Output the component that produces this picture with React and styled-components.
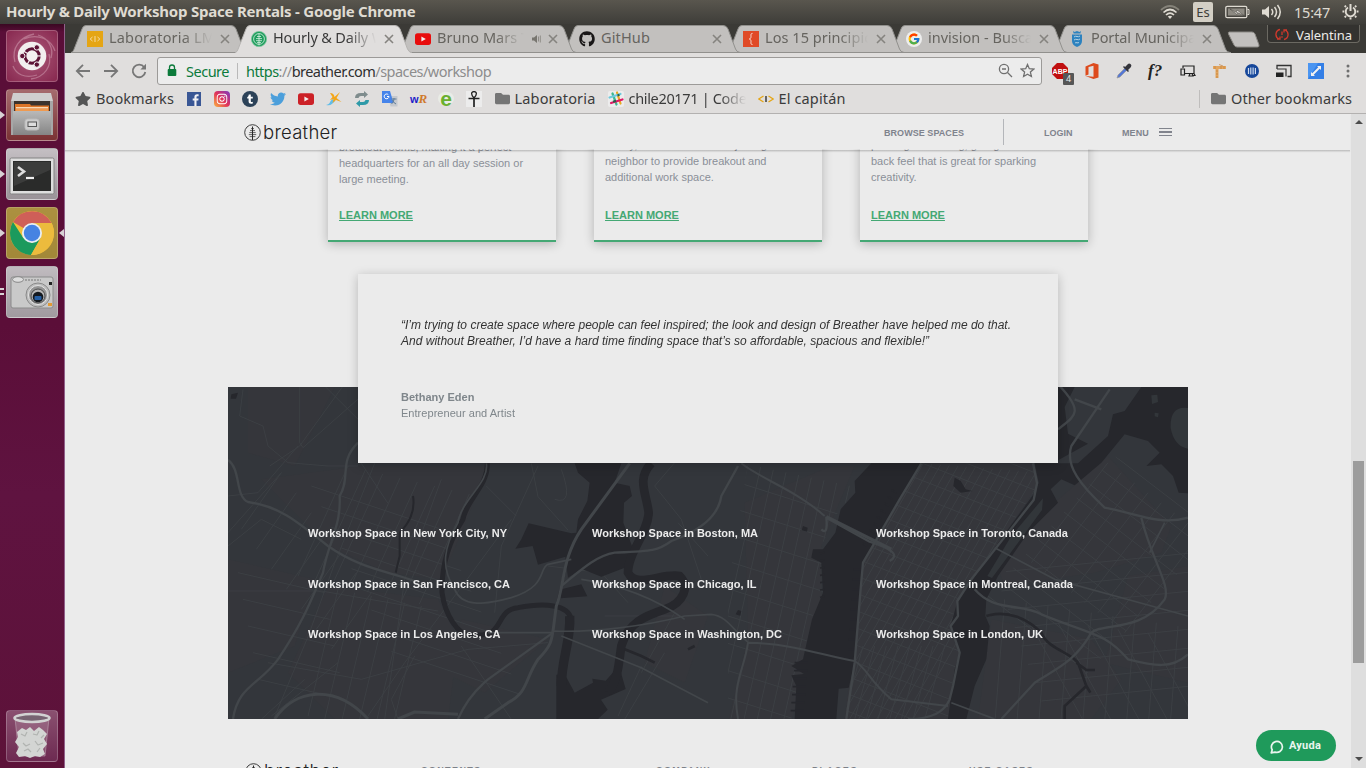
import React, { useLayoutEffect, useRef, useState } from "react";
import styled, { createGlobalStyle, css } from "styled-components";
import { FaInstagram, FaTwitter, FaGithub, FaFolder, FaStar } from "react-icons/fa";
import { FcGoogle } from "react-icons/fc";

const GlobalStyle = createGlobalStyle`
  *, *::before, *::after { box-sizing: border-box; }
  body { margin: 0; overflow: hidden; background: #ebebeb; }
  svg { display: block; flex: none; }
`;

const ui = css`font-family: "Noto Sans", "Open Sans", sans-serif;`;
const web = css`font-family: "Liberation Sans", Arial, sans-serif;`;

/* Text whose tracking is adjusted so that it takes a given width. */
const FitBox = styled.span`
  display: inline-block;
  white-space: pre;
  flex: none;
`;
function Fit({ w, children }) {
  const ref = useRef(null);
  const [spacing, setSpacing] = useState(0);
  useLayoutEffect(() => {
    const el = ref.current;
    el.style.letterSpacing = "0px";
    const natural = el.getBoundingClientRect().width;
    const next = (w - natural) / el.textContent.length;
    el.style.letterSpacing = `${next}px`;
    setSpacing(next);
  }, [w]);
  return <FitBox ref={ref} style={{ letterSpacing: spacing }}>{children}</FitBox>;
}

/* ---------- desktop shell ---------- */
const Desktop = styled.div`
  ${ui}
  width: 1366px;
  height: 768px;
  display: flex;
  flex-direction: column;
  overflow: hidden;
`;
const TopPanel = styled.header`
  height: 24px;
  flex: none;
  display: flex;
  align-items: center;
  justify-content: space-between;
  padding: 0 7px 0 6px;
  background: linear-gradient(#59564e, #3e3d39);
  color: #dfdbd2;
`;
const PanelTitle = styled.div`
  font-size: 15px;
  font-weight: 700;
  line-height: 22px;
  padding-bottom: 2px;
`;
const Indicators = styled.div`
  display: flex;
  align-items: center;
  font-size: 14.5px;
  line-height: 22px;
  padding-bottom: 1px;
`;
const Indicator = styled.div`
  display: flex;
  margin-right: ${(p) => p.$gap}px;
`;
const KeyboardBadge = styled.div`
  width: 20px;
  height: 20px;
  margin-right: 12px;
  border-radius: 2px;
  background: #d3cfc5;
  color: #3f3e3a;
  font-size: 13px;
  line-height: 20px;
  text-align: center;
`;
const DesktopBody = styled.div`
  flex: 1;
  min-height: 0;
  display: flex;
`;

/* ---------- launcher ---------- */
const Launcher = styled.nav`
  width: 65px;
  flex: none;
  display: flex;
  flex-direction: column;
  gap: 7px;
  padding: 6px 6px 6px;
  background: linear-gradient(#3a0822 0, #5a0e38 8px, #5b0e38 300px, #5f1340 470px, #5d1239 100%);
  border-right: 1px solid #91608a;
`;
const LauncherTile = styled.div`
  position: relative;
  width: 52px;
  height: 52px;
  flex: none;
  border-radius: 4px;
  background: ${(p) => p.$bg};
  border: 1px solid rgba(255, 255, 255, 0.22);
  display: flex;
  align-items: center;
  justify-content: center;
  margin-top: ${(p) => (p.$last ? "auto" : 0)};
`;
const Pip = styled.i`
  position: absolute;
  top: 21px;
  ${(p) => (p.$right ? "right: -7px; border-right: 5px solid #d8d2d5;" : "left: -7px; border-left: 5px solid #d8d2d5;")}
  border-top: 4px solid transparent;
  border-bottom: 4px solid transparent;
`;
const Bars = styled.i`
  position: absolute;
  left: -7px;
  top: 21px;
  width: 4px;
  height: 7px;
  border-top: 2px solid #d8d2d5;
  border-bottom: 2px solid #d8d2d5;
`;

/* ---------- browser ---------- */
const Browser = styled.main`
  flex: 1;
  min-width: 0;
  display: flex;
  flex-direction: column;
`;
const TabStrip = styled.div`
  height: 29px;
  flex: none;
  display: flex;
  padding: 1px 0 0 6px;
  background: #3b3a36;
  position: relative;
`;
const Tab = styled.div`
  position: relative;
  z-index: ${(p) => p.$z};
  width: ${(p) => p.$w}px;
  height: 28px;
  flex: none;
  color: ${(p) => (p.$active ? "#3a3a3a" : "#66645f")};
`;
const TabShape = styled.svg`
  position: absolute;
  left: 0;
  top: 0;
`;
const TabContent = styled.div`
  position: relative;
  height: 28px;
  display: flex;
  align-items: center;
  padding-left: 16px;
`;
const TabIcon = styled.div`
  width: 22px;
  flex: none;
`;
const TabLabel = styled.div`
  width: ${(p) => p.$w}px;
  overflow: hidden;
  font-size: 14.5px;
  line-height: 25px;
  padding-bottom: 3px;
  ${(p) => p.$fade && css`mask-image: linear-gradient(90deg, #000 calc(100% - 30px), transparent calc(100% - 1px));`}
`;
const AudioIcon = styled.svg`
  margin: 0 -2px 0 6px;
`;
const CloseIcon = styled.svg`
  margin-left: 7px;
`;
const NewTab = styled.svg`
  margin: 6px 0 0 11px;
`;
const UserBadge = styled.div`
  margin: 0 6px 0 auto;
  width: 93px;
  height: 18px;
  display: flex;
  align-items: center;
  gap: 7px;
  padding: 2px 0 0 7px;
  border: 1px solid #6b6962;
  border-top: 0;
  border-radius: 0 0 4px 4px;
  background: #33322f;
  color: #ecebe8;
  font-size: 13px;
`;
const Toolbar = styled.div`
  height: 36px;
  flex: none;
  display: flex;
  align-items: center;
  padding: 0 10px 0 10px;
  background: #e0dedd;
`;
const NavIcons = styled.div`
  display: flex;
  gap: 12px;
  width: 82px;
  flex: none;
`;
const Omnibox = styled.div`
  width: 885px;
  height: 28px;
  flex: none;
  display: flex;
  align-items: center;
  padding: 0 6px 1px 9px;
  border: 1px solid #9c9a98;
  border-radius: 3px;
  background: #ececec;
  color: #8d8d8d;
  font-size: 14.5px;
`;
const Secure = styled.span`
  color: #0b7a3b;
  margin-left: 9px;
  padding-right: 8px;
  margin-right: 8px;
  line-height: 16px;
  border-right: 1px solid #b9b9b9;
`;
const UrlScheme = styled.span`color: #0b7a3b;`;
const UrlHost = styled.span`color: #2f2f2f;`;
const OmniboxActions = styled.div`
  display: flex;
  gap: 7px;
  margin-left: auto;
`;
const Extensions = styled.div`
  display: flex;
  gap: 16px;
  margin-left: 10px;
`;
const Extension = styled.div`
  position: relative;
  display: flex;
  width: 16px;
  height: 16px;
`;
const ExtensionCount = styled.span`
  position: absolute;
  left: 11px;
  top: 10px;
  width: 11px;
  height: 12px;
  background: #565656;
  color: #eee;
  border-radius: 1px;
  font: 9px/12px "Open Sans", sans-serif;
  text-align: center;
`;
const FontQuery = styled.span`
  font: italic 700 17px/15px "Liberation Serif", serif;
  color: #222;
  white-space: nowrap;
`;
const BookmarkBar = styled.div`
  height: 25px;
  flex: none;
  display: flex;
  align-items: center;
  padding: 0 14px 5px 10px;
  background: #e0dedd;
  border-bottom: 1px solid #b3b1b0;
  color: #3b3b3b;
  font-size: 14.5px;
`;
const BookmarkLabel = styled.span`
  width: ${(p) => p.$w}px;
  overflow: hidden;
  line-height: 20px;
  ${(p) => p.$fade && css`mask-image: linear-gradient(90deg, #000 calc(100% - 26px), transparent);`}
`;
const Bookmark = styled.div`
  display: flex;
  align-items: center;
  height: 18px;
  gap: ${(p) => p.$gap ?? 5}px;
  margin-left: ${(p) => p.$ml ?? 12}px;
  & > ${FitBox}, & > ${BookmarkLabel} { margin-bottom: 2px; }
`;
const OtherBookmarks = styled(Bookmark)`
  margin-left: auto;
  padding-left: 11px;
  border-left: 1px solid #bfbdbc;
`;
const TinyGlyph = styled.span`
  width: 16px;
  text-align: center;
  white-space: nowrap;
  font: ${(p) => p.$font};
  color: ${(p) => p.$c};
  background: ${(p) => p.$bg ?? "none"};
  border-radius: ${(p) => p.$r ?? 0}px;
`;

/* ---------- page ---------- */
const PageArea = styled.div`
  ${web}
  position: relative;
  flex: 1;
  min-height: 0;
  display: flex;
  background: #ebebeb;
`;
const Page = styled.div`
  flex: 1;
  min-width: 0;
  display: flex;
  flex-direction: column;
`;
const SiteNav = styled.div`
  position: relative;
  z-index: 3;
  height: 37px;
  margin-right: 1px;
  flex: none;
  display: flex;
  align-items: center;
  padding: 0 178px 1px 179px;
  background: linear-gradient(#ebebeb 35px, rgba(235, 235, 235, 0.35) 35px 36px, rgba(0, 0, 0, 0.17) 36px);
  box-shadow: 0 1px 1px rgba(0, 0, 0, 0.08);
  color: #7f838d;
  font-size: 9px;
  font-weight: 700;
`;
const NavLink = styled.a`
  margin-left: ${(p) => p.$ml}px;
  padding-top: 2px;
`;
const NavRule = styled.i`
  width: 1px;
  height: 26px;
  margin-left: 39px;
  background: #b4b6ba;
`;
const Burger = styled.i`
  width: 13px;
  height: 8px;
  margin: 0 0 0 10px;
  background: linear-gradient(#81848d 1px, transparent 1px 3px, #81848d 3px 5px, transparent 5px 7px, #81848d 7px);
`;
const Logo = styled.div`
  display: flex;
  align-items: center;
  gap: 2px;
  color: #222;
  font: 300 18.5px/20px Inter, sans-serif;
`;
const ScrollContent = styled.div`
  flex: 1;
  min-height: 0;
  margin-top: -2px;
  overflow: hidden;
  display: flex;
  flex-direction: column;
  align-items: center;
`;
const Cards = styled.section`
  display: flex;
  gap: 38px;
  margin-top: -18px;
`;
const Card = styled.article`
  width: 228px;
  height: 111px;
  padding: ${(p) => p.$top}px 11px 0;
  border-bottom: 2px solid #44a874;
  box-shadow: 0 2px 10px rgba(0, 0, 0, 0.24);
  display: flex;
  flex-direction: column;
  justify-content: space-between;
  font-size: 11px;
  line-height: 16px;
  color: #8a8f98;
`;
const CardText = styled.p`margin: 0; white-space: pre;`;
const LearnMore = styled.a`
  margin-bottom: 17px;
  color: #44a874;
  font-weight: 700;
  text-decoration: underline;
`;
const Testimonial = styled.section`
  position: relative;
  z-index: 1;
  width: 700px;
  height: 189px;
  flex: none;
  margin-top: 32px;
  padding: 43px;
  background: #ebebeb;
  box-shadow: 0 2px 10px rgba(0, 0, 0, 0.22);
`;
const Quote = styled.p`
  margin: 0 0 40px;
  font-size: 12px;
  font-style: italic;
  line-height: 16px;
  color: #333;
`;
const Person = styled.p`
  margin: 0;
  font-size: 11px;
  line-height: 16px;
  color: #7f868b;
  font-weight: ${(p) => (p.$bold ? 700 : 400)};
`;
const CityMap = styled.section`
  position: relative;
  width: 960px;
  height: 332px;
  flex: none;
  margin-top: -76px;
  background: #33363b;
  overflow: hidden;
`;
const MapArt = styled.svg`
  position: absolute;
  inset: 0;
`;
const CityGrid = styled.div`
  position: relative;
  display: grid;
  grid-template-columns: repeat(3, 284px);
  grid-auto-rows: 50.5px;
  align-items: center;
  padding: 121px 0 0 80px;
  color: #ececec;
  font-size: 11px;
  font-weight: 700;
`;
const Footer = styled.footer`
  width: 960px;
  flex: none;
  display: flex;
  padding: 42px 0 0 17px;
  color: #7d8188;
  font-size: 9px;
  font-weight: 700;
`;
const FooterHeading = styled.div`
  width: ${(p) => p.$w}px;
  padding-top: 4px;
`;
const FooterBrand = styled.div`
  width: 176px;
`;
const Scrollbar = styled.div`
  width: 15px;
  flex: none;
  display: flex;
  flex-direction: column;
  align-items: center;
  padding: 6px 0 7px;
  background: #dedede;
`;
const ScrollArrow = styled.i`
  border: 5px solid transparent;
  border-width: ${(p) => (p.$down ? "4px 4px 0" : "0 4px 4px")};
  border-${(p) => (p.$down ? "top" : "bottom")}-color: #4c4c4c;
`;
const Thumb = styled.i`
  width: 11px;
  height: 202px;
  margin: 337px 0 auto;
  background: #9c9c9c;
`;
const HelpButton = styled.button`
  position: absolute;
  right: 30px;
  bottom: 7px;
  z-index: 4;
  width: 80px;
  height: 31px;
  display: flex;
  align-items: center;
  gap: 5px;
  padding: 0 0 0 14px;
  border: 0;
  border-radius: 16px;
  background: #1f9a5b;
  color: #e9f5ee;
  font: 700 11px/31px Roboto, sans-serif;
`;
const HelpIcon = styled.svg`
  margin-top: 2px;
`;

/* ---------- drawings ---------- */
const BrandLogo = () => (
  <Logo>
    <svg width="17" height="17" viewBox="0 0 17 17" fill="none" stroke="#2a2a2a">
      <circle cx="8.5" cy="8.5" r="7.8" strokeWidth=".9" />
      <path d="M8.5 2.5V16" strokeWidth="1" />
      <path d="M7 4.6h3M6 6.6h5M5.300 8.6h6.400M4.800 10.6h7.400M5.6 12.6h5.800" strokeWidth=".7" />
    </svg>
    <Fit w={74.5}>breather</Fit>
  </Logo>
);

const Dash = () => (
  <svg width="52" height="52" viewBox="0 0 52 52">
    <g fill="none" stroke="#e7c3d0" strokeOpacity=".38" strokeWidth="1.3">
      <path d="M9 32C5 18 14 7 28 4M43 24c3 12-4 23-18 25M18 9c14-6 27 0 31 12M31 45C19 49 10 44 7 36M32 5c10 3 16 13 13 23" />
    </g>
    <circle cx="26" cy="26" r="14.3" fill="#f2efef" />
    <circle cx="26" cy="26" r="7.2" fill="none" stroke="#5c1235" strokeWidth="3" />
    <path d="M26 26L37 19.6M26 26v12M26 26H13" stroke="#f2efef" strokeWidth="1.2" transform="rotate(30 26 26)" />
    <circle cx="26" cy="26" r="4.7" fill="#f2efef" />
    <g fill="#5c1235" stroke="#f2efef" strokeWidth="1"><circle cx="16.3" cy="26" r="2.7" /><circle cx="30.8" cy="17.4" r="2.7" /><circle cx="30.8" cy="34.6" r="2.7" /></g>
  </svg>
);
const Files = () => (
  <svg width="52" height="52" viewBox="0 0 52 52">
    <defs><linearGradient id="fg" x2="0" y2="1"><stop stopColor="#b9b9b9" /><stop offset="1" stopColor="#858585" /></linearGradient></defs>
    <path d="M7 4h38l2 8v5H5v-5z" fill="#cfcfcf" /><path d="M5 12h42v34H5z" fill="#a7a7a7" />
    <path d="M8 12h36v12H8z" fill="#3b332d" /><path d="M9 15h15l1 1.5h18V24H9z" fill="#dc7528" /><path d="M10 18h32v1.5H10z" fill="#f8d9b5" /><path d="M10 20h32v3H10z" fill="#ef9a50" />
    <path d="M7 22h38v24H7z" fill="url(#fg)" /><rect x="19" y="30" width="14" height="11" rx="2.5" fill="#ccc" stroke="#bbb" /><rect x="22" y="33" width="8.5" height="4.5" fill="#ddd" stroke="#555" />
  </svg>
);
const Terminal = () => (
  <svg width="52" height="52" viewBox="0 0 52 52">
    <rect x="4" y="10" width="44" height="36" rx="1.5" fill="#dedede" stroke="#828282" /><rect x="7" y="13" width="38" height="30" fill="#2a2b2a" /><path d="M8 14h36v8L8 38z" fill="#474747" opacity=".6" />
    <path d="M12 19l6 4.5-6 4.5" fill="none" stroke="#ddd" strokeWidth="2.6" /><path d="M20 30h8" stroke="#eee" strokeWidth="2.2" />
  </svg>
);
const Chrome = () => (
  <svg width="52" height="52" viewBox="0 0 52 52">
    <circle cx="26" cy="26" r="22" fill="#f2c038" />
    <path d="M26 26L7 15A22 22 0 0 1 45.5 16H26z" fill="#cf5f58" /><path d="M7 15A22 22 0 0 0 25 48L34.7 31 26 36 17.3 31z" fill="#1b9a5d" /><path d="M26 16h19.500A22 22 0 0 1 25 48l9.700-17z" fill="#ecbb3d" />
    <circle cx="26" cy="26" r="10" fill="#e9eef3" /><circle cx="26" cy="26" r="8.2" fill="#4683e2" />
  </svg>
);
const Camera = () => (
  <svg width="52" height="52" viewBox="0 0 52 52">
    <rect x="5" y="11" width="42" height="31" rx="2" fill="#c9c9c9" stroke="#8b8b8b" /><ellipse cx="12" cy="13.5" rx="5.5" ry="2.8" fill="#ddd" stroke="#888" /><path d="M19 14h16" stroke="#777" strokeDasharray="2 1" />
    <rect x="43" y="16" width="3" height="3" fill="#222" /><rect x="42" y="37" width="4" height="3" fill="#e39a33" />
    <circle cx="32" cy="29" r="12" fill="#bdbdbd" stroke="#8a8a8a" /><circle cx="32" cy="29" r="9.5" fill="#959595" stroke="#e5e5e5" /><circle cx="32" cy="30" r="7" fill="#b5b5b5" stroke="#4e4e4e" /><circle cx="32" cy="31" r="5.300" fill="#14191f" /><rect x="28.5" y="30" width="7" height="4" rx="1" fill="#255fa4" />
  </svg>
);
const Trash = () => (
  <svg width="52" height="52" viewBox="0 0 52 52">
    <path d="M9 8h34l-4 38H13z" fill="#fff" fillOpacity=".15" stroke="#c9b5c0" strokeOpacity=".5" />
    <path d="M11 22l5-4 4 2 4-3 4 4 5-4 4 3 4 4-3 5 3 5-4 5 2 5-5 3-5-1-5 2-5-2-6 1-3-4 3-6-4-5 3-5z" fill="#d3d5d3" />
    <path d="M15 24l4 2 2-4M27 24l4 1 2-4M38 25l-3 3M17 33l3 3 4-2M29 31l3 4 5-2M18 41l4-2 3 3M31 42l3-4" stroke="#b0b3b0" fill="none" strokeWidth="1.200" strokeLinejoin="round" />
    <ellipse cx="26" cy="8" rx="17.5" ry="4" fill="#776371" stroke="#d2d2d2" strokeWidth="2.6" />
  </svg>
);

const YouTube = ({ bg = "#e80c0c" }) => (
  <svg width="16" height="16" viewBox="0 0 16 16"><rect x="0" y="2.3" width="16" height="11.6" rx="2.6" fill={bg} /><path d="M6.4 5.5v5l4.400-2.500z" fill="#f4eded" /></svg>
);
const CodeTag = ({ boxed }) => (
  <svg width="16" height="16" viewBox="0 0 16 16" fill="none" strokeWidth={boxed ? 0.9 : 1.3}>
    {boxed && <rect width="16" height="16" fill="#e5a514" />}
    <path d={boxed ? "M5.500 6L3.200 8l2.300 2M10.500 6l2.300 2-2.300 2" : "M5.500 5L.8 8l4.700 3M10.500 5L15.200 8l-4.700 3"} stroke={boxed ? "#f5e2b5" : "#e5a514"} />
    <path d="M8 5v6" stroke={boxed ? "#f5e2b5" : "#222"} />
  </svg>
);
const BreatherFavicon = () => (
  <svg width="16" height="16" viewBox="0 0 16 16" fill="none" stroke="#d9efe2"><circle cx="8" cy="8" r="7.600" fill="#1d9d5c" stroke="#7ac39a" strokeWidth=".8" /><circle cx="8" cy="8" r="5.400" strokeWidth=".8" /><path d="M8 2.500v12M6 5.500h4M5 7.600h6M5 9.700h6M6 11.600h4" strokeWidth=".8" /></svg>
);
const BraceFavicon = () => (
  <svg width="16" height="16" viewBox="0 0 16 16"><rect width="16" height="16" fill="#e04a26" /><path d="M9.500 2.400C7.600 2.400 8 4 8 5.500 8 7 7.600 7.600 6.400 8 7.600 8.400 8 9 8 10.500c0 1.500-.4 3.100 1.500 3.100" stroke="#f7e4dd" fill="none" /></svg>
);
const CrestFavicon = () => (
  <svg width="16" height="16" viewBox="0 0 16 16"><path d="M4 0l1.500 1L8 0l2.500 1L12 0l-.6 2.600h-6.800zM3 3.400h10V10c0 3-2 5-5 6-3-1-5-3-5-6z" fill="#2c82bf" /><path d="M5 6c2-2 4 1 6-1M5 9c2-2 4 1 6-1M6 12c1-1 3 .6 4-.6" stroke="#b5d2e4" fill="none" /></svg>
);
const Close = () => (
  <CloseIcon width="10" height="10" viewBox="0 0 10 10"><path d="M1 1l8 8M9 1L1 9" stroke="#85837f" strokeWidth="1.600" /></CloseIcon>
);

const tabs = [
  { label: "Laboratoria LM", w: 106, fade: true, icon: <CodeTag boxed />, step: 164 },
  { label: "Hourly & Daily W", w: 112, fade: true, icon: <BreatherFavicon />, step: 164, active: true },
  { label: "Bruno Mars T", w: 92, fade: true, icon: <YouTube />, step: 164, audio: true },
  { label: "GitHub", w: 49, icon: <FaGithub size={16} color="#191717" />, step: 164 },
  { label: "Los 15 principio", w: 108, fade: true, icon: <BraceFavicon />, step: 163 },
  { label: "invision - Busca", w: 105, fade: true, icon: <svg width="16" height="16" viewBox="0 0 16 16"><circle cx="8" cy="8" r="8" fill="#ededed" /><FcGoogle size={13} x="1.5" y="1.5" /></svg>, step: 163 },
  { label: "Portal Municipal", w: 109, fade: true, icon: <CrestFavicon />, step: 163 },
];

function Tabs() {
  return tabs.map((t, i) => (
    <Tab key={t.label} $w={t.step} $z={t.active ? 20 : 10 - i} $active={t.active}>
      <TabShape width="178" height="28" viewBox="0 0 178 28">
        <path d="M0 28C2 27 2.500 25.500 3.500 23L11 4Q12 .5 15 .5H160Q163.500.5 165 4l7.500 20Q173.500 27 177 28z" fill={t.active ? "#e0dedd" : "#c2c0be"} />
        <path d="M0 27.500C2 27 2.500 25.500 3.500 23L11 4Q12 .5 15 .5H160Q163.500.5 165 4l7.500 20Q173.500 27 177 27.500" fill="none" stroke={t.active ? "#b6b4b2" : "#91908d"} />
        {!t.active && <path d="M0 27.500H178" stroke="#91908d" />}
      </TabShape>
      <TabContent>
        <TabIcon>{t.icon}</TabIcon>
        <TabLabel $w={t.audio ? 88 : 104} $fade={t.fade}><Fit w={t.w}>{t.label}</Fit></TabLabel>
        {t.audio && (
          <AudioIcon width="12" height="12" viewBox="0 0 12 12"><path d="M1 4.500h2L6 2v8L3 7.500H1z" fill="#77756f" /><path d="M7.500 3.500v5M9.300 2.500v7" stroke="#8f8d88" /></AudioIcon>
        )}
        <Close />
      </TabContent>
    </Tab>
  ));
}

const Ext = ({ children }) => <svg width="16" height="16" viewBox="0 0 16 16">{children}</svg>;

/* Parallel streets: n lines that start at (x, y), each shifted by (sx, sy), all running along (dx, dy). */
const streets = (n, x, y, sx, sy, dx, dy) =>
  Array.from({ length: n }, (_, i) => `M${x + sx * i} ${y + sy * i}l${dx} ${dy}`).join("");

function MapDrawing() {
  return (
    <MapArt width="960" height="332" viewBox="0 3 2880 996" preserveAspectRatio="none" fill="none">
      <defs>
        <clipPath id="manhattan"><path d="M2080 232H2420L2430 300 2300 485 2235 580 2190 640 2168 720 2195 800 2180 860 2160 999H1850L1880 830 1895 620 1905 530 1940 470z" /></clipPath>
        <clipPath id="jersey"><path d="M1560 232H1900L1880 320 1835 370 1780 480 1785 620 1750 700 1725 820 1690 999H1500V600z" /></clipPath>
        <clipPath id="queens"><path d="M2530 300L2640 200 2880 330V999H2220L2275 820 2270 640z" /></clipPath>
      </defs>
      <g fill="#35363b">
        <path d="M60 3h260L200 240 60 200zM100 280l300-40 380 0-80 200-60 140-160-20-180-80zM0 520l260 60-60 200L0 860zM300 600l330 40 60 120-30 240H320L180 860zM700 700l260 60-190 160-120-60zM1550 350l260-110 70 0-100 240 0 160-60 240-30 130h-190l60-260zM1310 600l130 90-70 200-120-60z" />
        <path d="M2080 232H2420L2430 300 2235 580 2168 720 2195 800 2160 999H1850L1895 620 1905 530z" />
        <path d="M2480 350L2640 210 2830 420 2800 500 2600 560 2330 600 2300 520zM2700 570l180-30v350l-250-60zM2290 700l300 60 90 120-90 119h-340z" />
      </g>
      <g stroke="#3f4347" strokeWidth="3" opacity=".75">
        <path d={streets(8, 360, 240, 52, 12, -150, 330)} />
        <path d={streets(9, 250, 300, 30, 62, 390, 130)} />
        <path d={streets(7, 40, 430, 45, 60, 120, -170)} />
        <path d={streets(6, 330, 610, 50, 10, -90, 380)} />
        <path d={streets(5, 30, 560, 15, 80, 260, 60)} />
        <path d="M45 10l-10 80 70 30 15 60 60 50 120 10 90 0M215 0v170l10 15 170-150M290 0l100 100M345 0l-130 180-90 60M0 440l160-180M0 480l100-80 120 60M0 330l90-10 120-140M400 232l80 120M440 232l-120 300-80 220-100 240M640 280l-110 300-60 420M910 232l20 100 90 100M930 240l-110 240-20 200M775 300l90 90M850 400l-140 190-180 240-110 160M0 615h280l350 60M120 830l280 50 320-90 240-20M700 780l150 220M560 810l-70 130 20 60M1130 690h220M1240 840l-70 150M1310 800l-120 200M1240 860l100-180M1000 250q40 110-20 90M1280 300l60-70M1280 300l80 100 60 180M1350 410l90 100M130 990l200-160M230 880L100 1000M960 540l160 20 80 90M1040 450l160 60M1050 480l70 80" />
        <g clipPath="url(#jersey)"><path d={streets(12, 1560, 235, 38, 8, -170, 760)} /><path d={streets(9, 1500, 280, 0, 82, 380, 120)} /></g>
        <g clipPath="url(#manhattan)"><path d={streets(17, 2060, 230, 26, 2, -440, 770)} /><path d={streets(22, 1860, 240, 0, 52, 560, 220)} transform="translate(0 -200)" /><path d={streets(9, 1870, 780, 35, 0, -60, 220)} /></g>
        <g clipPath="url(#queens)"><path d={streets(11, 2660, 210, -38, 42, 300, 230)} /><path d={streets(8, 2640, 230, 40, 30, -230, 300)} /><path d={streets(9, 2330, 640, 65, 10, -30, 380)} /><path d={streets(8, 2300, 560, 20, 55, 600, -60)} /><path d={streets(5, 2400, 700, 90, 10, 180, 330)} /></g>
      </g>
      <g fill="#26272c">
        <path d="M1040 232H1180L1160 290 1205 300 1212 330 1188 350 1186 410 1212 480 1190 545 1120 572 1060 548 1020 575 1012 512 930 536 914 480 862 488 880 460 902 412 1030 442 1045 440 1050 400 1078 345 1085 290 1050 260z" />
        <path d="M985 866l26 0 29 54 55-30-2-12 40 6 40-45 20 70-74 32 20 30-30 29H985z" />
        <path d="M10 25l20-5-6 18-16 0zM1000 610l60-15 18 36-80 6z" />
        <path d="M1930 232H2080L2015 340 1940 470 1905 530 1897 620 1880 830 1862 905 1832 908 1825 999H1700L1705 900 1690 868 1728 864 1690 840 1725 820 1752 700 1785 620 1780 530 1750 515 1755 490 1785 490 1822 440 1838 370 1882 320 1880 285z" />
        <path d="M2490 3h50l-30 60 10 80 60 30-90 50zM2740 3H2880V322L2852 320 2835 270 2800 235 2755 240 2795 200 2760 165 2690 145 2620 230 2540 298 2500 280 2468 310 2490 350 2400 440 2310 570 2275 640 2272 690 2285 720 2275 820 2240 900 2215 999H2160L2180 850 2195 800 2168 720 2190 640 2235 580 2300 485 2420 320 2432 290 2420 232H2550L2640 150 2655 85 2690 75z" />
        <path d="M2180 275l18 10 15 25 20 5-35 5-22-20zM1725 420l14 5-2 12-16-4zM1530 672l10 3-3 14-14-4z" />
      </g>
      <path d="M2445 337L2350 450 2278 570 2292 576 2370 470 2442 372zM2880 66q-55-8-52 60 10 55 52 62zM2770 28l18-2 2 22-18 6zM2780 80l12 2-2 12-10-3z" fill="#32363a" />
      <g stroke="#26272c">
        <path d="M1270 232C1225 280 1255 320 1262 380 1260 440 1200 500 1200 560 1225 610 1300 560 1355 570 1385 600 1370 650 1310 670 1250 690 1200 710 1180 780 1170 850 1170 880 1140 920" strokeWidth="26" />
        <path d="M778 232C780 300 715 340 705 400 660 470 640 540 642 620 650 680 690 760 740 745 830 760 800 670 870 665 950 650 1020 655 1030 700 1030 760 1000 820 1000 900" strokeWidth="15" />
        <path d="M1025 690C1030 760 1000 820 1000 900" strokeWidth="28" />
        <path d="M555 330q10 60-40 110v70l-12 50M1020 520l-20 80-15 60" strokeWidth="6" />
        <path d="M2275 690C2340 670 2400 700 2440 740 2460 790 2530 800 2550 830L2575 900 2510 960V999M2545 830l30 22h26M2575 900l12 20M1190 790l50 20 40 20M1400 780l-20 10" strokeWidth="8" />
        <path d={streets(9, 2005, 320, -11, 20, -14, -8) + streets(9, 1900, 550, -2, 30, -24, 0) + streets(7, 1700, 830, -2, 24, 40, 0) + streets(7, 1790, 500, 0, 22, -14, 2)} strokeWidth="5" />
      </g>
      <g stroke="#42464a" strokeWidth="7" strokeLinejoin="round">
        <path d="M0 222C40 250 20 330 60 348 150 360 200 400 300 480 400 550 480 555 560 585" />
        <path d="M390 170C330 230 370 270 335 330 340 420 300 470 285 560 250 640 230 700 150 820 90 900 30 900 15 999" />
        <path d="M140 999C200 910 320 890 420 999M510 999L560 978 690 985" strokeWidth="9" />
        <path d="M775 232C785 290 700 340 690 410 650 480 635 540 680 610 700 660 760 660 850 635 960 600 930 550 960 535L1030 520" strokeWidth="5" />
        <path d="M1205 232L1060 430C1000 520 1010 600 985 660 970 760 980 770 930 820 890 880 900 920 840 950L770 999" strokeWidth="9" />
        <path d="M975 740L780 880Q720 930 690 999M1000 600C1050 560 1100 510 1160 500 1270 495 1290 495 1330 465 1400 440 1470 400 1480 330L1530 240" />
        <path d="M975 735C1100 740 1250 720 1370 690L1450 685C1500 690 1520 740 1560 768M1000 750L1240 845 1440 950M1060 580C1200 600 1300 650 1370 700M780 740L975 740" strokeWidth="5" />
        <path d="M1540 232C1600 280 1700 310 1790 390" strokeWidth="6" />
        <path d="M1780 430q20 20 15-35l130 72Q2030 500 1985 525" strokeWidth="7" />
        <path d="M1795 392L1990 490" strokeWidth="10" />
        <path d="M1530 999C1510 890 1550 850 1560 770 1680 770 1790 810 1880 825 1920 850 1920 880 1990 940L2160 960" strokeWidth="6" />
        <path d="M2080 232L2015 340 1940 470 1905 530 1897 620 1880 830 1855 999M2415 232l12 60-10 50L2230 580 2188 645 2190 690 2168 720 2195 800 2175 900 2165 940Q2140 1000 2040 999" />
        <path d="M2495 0C2570 80 2540 90 2490 130M2645 10L2530 180C2510 240 2560 300 2630 365 2720 380 2790 420 2880 395M2620 70L2540 40" />
        <path d="M2740 395C2770 520 2830 600 2810 640 2740 740 2620 710 2590 740 2540 830 2480 850 2420 890L2320 999M2240 610C2300 680 2380 650 2440 685 2600 750 2630 740 2700 820 2780 840 2830 850 2880 805" />
        <path d="M2300 485L2480 580 2880 690M2810 410l-45 90M2170 950l130 49" strokeWidth="5" />
      </g>
    </MapArt>
  );
}

const cards = [
  { top: 8, text: "breakout rooms, making it a perfect\nheadquarters for an all day session or\nlarge meeting." },
  { top: 6, text: "library, while there is an adjoining\nneighbor to provide breakout and\nadditional work space." },
  { top: 6, text: "paintings and a rug, giving a laid\nback feel that is great for sparking\ncreativity." },
];
const cities = [
  ["New York City, NY", 199], ["Boston, MA", 166], ["Toronto, Canada", 192],
  ["San Francisco, CA", 202], ["Chicago, IL", 164.5], ["Montreal, Canada", 197],
  ["Los Angeles, CA", 192.5], ["Washington, DC", 190], ["London, UK", 167],
];

export default function App() {
  return (
    <Desktop>
      <GlobalStyle />
      <TopPanel>
        <PanelTitle><Fit w={409.5}>Hourly &amp; Daily Workshop Space Rentals - Google Chrome</Fit></PanelTitle>
        <Indicators>
          <Indicator $gap={13}>
            <svg width="20" height="14" viewBox="0 0 20 14" fill="none" strokeWidth="1.700"><path d="M1 5Q10-3 19 5" stroke="#858279" /><path d="M3.500 7.500Q10 1.500 16.500 7.500M6 10Q10 6 14 10" stroke="#dfdbd2" /><path d="M7.800 11.500L10 14l2.200-2.500Q10 10 7.800 11.500z" fill="#dfdbd2" /></svg>
          </Indicator>
          <KeyboardBadge>Es</KeyboardBadge>
          <Indicator $gap={11}>
            <svg width="25" height="14" viewBox="0 0 25 14"><rect x=".8" y="1.300" width="21" height="11.400" rx="1.500" fill="none" stroke="#dfdbd2" strokeWidth="1.300" /><path d="M22.500 4.500h1.500v5h-1.500" fill="none" stroke="#dfdbd2" /><rect x="3" y="3.500" width="16.500" height="7" fill="#8d8a82" /><path d="M5 4l6.500 3.500L12 5l7 5.500-6.500-3L12 9.500z" fill="#f1eee8" stroke="#3e3d39" strokeWidth=".5" /></svg>
          </Indicator>
          <Indicator $gap={12}>
            <svg width="21" height="16" viewBox="0 0 21 16" fill="none" stroke="#dfdbd2" strokeWidth="1.500"><path d="M1 5.500h3L8 2v12l-4-3.500H1z" fill="#dfdbd2" stroke="none" /><path d="M10.500 5q2.500 3 0 6M13.500 3q4 5 0 10M16.500 1q5.500 7 0 14" /></svg>
          </Indicator>
          <Fit w={36}>15:47</Fit>
          <Indicator $gap={0}>
            <svg width="29" height="17" viewBox="-12 0 29 17" fill="none" stroke="#dfdbd2"><path d="M6 4.500a4.800 4.800 0 1 0 5 0" strokeWidth="2" /><path d="M8.500 1v7" strokeWidth="2" /><path d="M2.200 8.500H.5M16.500 8.500h-1.700M4 13l-1.300 1.300M13 13l1.300 1.300M8.500 14.500v2M4 4L2.700 2.700M13 4l1.300-1.300" strokeWidth="1.900" /></svg>
          </Indicator>
        </Indicators>
      </TopPanel>
      <DesktopBody>
        <Launcher>
          <LauncherTile $bg="radial-gradient(circle, #c8879f 0, #9c4467 45%, #87284f 100%)"><Dash /></LauncherTile>
          <LauncherTile $bg="linear-gradient(#a56b6e, #7a3234)"><Pip /><Files /></LauncherTile>
          <LauncherTile $bg="linear-gradient(#c4bfc3, #9a9398)"><Pip /><Terminal /></LauncherTile>
          <LauncherTile $bg="linear-gradient(#ac9040, #a28838)"><Pip /><Pip $right /><Chrome /></LauncherTile>
          <LauncherTile $bg="linear-gradient(#c0bbbf, #a19aa0)"><Bars /><Camera /></LauncherTile>
          <LauncherTile $last $bg="linear-gradient(#8a5070, #6d2a51)"><Trash /></LauncherTile>
        </Launcher>
        <Browser>
          <TabStrip>
            <Tabs />
            <NewTab width="33" height="17" viewBox="0 0 33 17"><path d="M2 1h23q2 0 3 2l4 11q.5 2-1.500 2H10q-2 0-3-2L1.500 3Q1 1 2 1z" fill="#c2c0be" stroke="#8b8985" /></NewTab>
            <UserBadge>
              <svg width="14" height="13" viewBox="0 0 14 13" fill="none" stroke="#d0392c" strokeWidth="1.300"><path d="M5 1.500a5 5 0 0 0-1 9.500M2 11h3V8.500M9 11.500a5 5 0 0 0 1-9.500M12 2H9v2.500M7 3.500v3.500M7 8.300v1.400" /></svg>
              <Fit w={56}>Valentina</Fit>
            </UserBadge>
          </TabStrip>
          <Toolbar>
            <NavIcons>
              <svg width="16" height="16" viewBox="0 0 16 16" fill="none" stroke="#777" strokeWidth="1.800"><path d="M15 8H2.500M8 1.800L1.800 8 8 14.200" /></svg>
              <svg width="16" height="16" viewBox="0 0 16 16" fill="none" stroke="#777" strokeWidth="1.800"><path d="M1 8h12.500M8 1.800L14.200 8 8 14.200" /></svg>
              <svg width="16" height="16" viewBox="0 0 16 16" fill="none" stroke="#777" strokeWidth="1.800"><path d="M13.200 4.200A6.300 6.300 0 1 0 14.300 9" /><path d="M15 .8v5.600H9.400z" fill="#777" stroke="none" /></svg>
            </NavIcons>
            <Omnibox>
              <svg width="10" height="13" viewBox="0 0 10 13"><path d="M2.500 6V3.500a2.500 2.500 0 0 1 5 0V6" fill="none" stroke="#0b7a3b" strokeWidth="1.300" /><rect x=".7" y="5" width="8.600" height="7" rx="1" fill="#0b7a3b" /></svg>
              <Secure><Fit w={43}>Secure</Fit></Secure>
              <Fit w={245}><UrlScheme>https</UrlScheme>://<UrlHost>breather.com</UrlHost>/spaces/workshop</Fit>
              <OmniboxActions>
                <svg width="15" height="15" viewBox="0 0 15 15" fill="none" stroke="#707070" strokeWidth="1.300"><circle cx="6" cy="6" r="4.600" /><path d="M9.500 9.500l4.500 4.500M4 6h4" /></svg>
                <svg width="15" height="15" viewBox="0 0 15 15" fill="none" stroke="#707070" strokeWidth="1.300"><path d="M7.500 1.500l1.800 4.200 4.500.4-3.400 3 1 4.400-3.900-2.300-3.900 2.300 1-4.400-3.400-3 4.500-.4z" /></svg>
              </OmniboxActions>
            </Omnibox>
            <Extensions>
              <Extension>
                <Ext><path d="M5 0h6l5 5v6l-5 5H5l-5-5V5z" fill="#c00f0f" /><text x="8" y="10.500" fontFamily="Liberation Sans" fontWeight="700" fontSize="7" textAnchor="middle" fill="#fff">ABP</text></Ext>
                <ExtensionCount>4</ExtensionCount>
              </Extension>
              <Extension><Ext><path d="M1.500 3.500L9.500 0l5 1.500v13l-5 1.500-8-3 8 .8V2.800L4.500 4v7.500l-3 1.200z" fill="#dd4a1c" /></Ext></Extension>
              <Extension><Ext><path d="M1 15l1-3 7-7 2 2-7 7z" fill="#5577d4" stroke="#999" strokeWidth=".7" /><path d="M7 4l5 5 1-1-1-1 3-3q1-2-.5-3T12 1L9 4 8 3z" fill="#35353b" /></Ext></Extension>
              <Extension><FontQuery>f?</FontQuery></Extension>
              <Extension><Ext><path d="M3 5V3h11v8M1 6h3.500v6H1zM4.500 10.500H14l1 2h-2.500M9 13l1-2.500h2l1 2.500z" fill="none" stroke="#222" strokeWidth="1.200" /></Ext></Extension>
              <Extension><Ext><path d="M1 3h13v3H6.500v9h-3V6H1z" fill="#e2a55f" /><path d="M3 3v3M7 1.500L11 3M9 3v3M12 3v3M4 8h2M4 11h2M4 14h2" stroke="#c37e37" strokeWidth=".7" /></Ext></Extension>
              <Extension><Ext><circle cx="8" cy="8" r="7" fill="#17479a" /><path d="M4.500 5v6M6.800 4.500v7M9.100 4.500v7M11.400 5v6" stroke="#cdd9ec" strokeWidth="1.200" /></Ext></Extension>
              <Extension><Ext><path d="M1 6V2.500h14v11h-3.500" fill="none" stroke="#333" strokeWidth="1.300" /><path d="M1 6h9v7.500" fill="none" stroke="#333" strokeWidth="1.200" /><rect x="0" y="9.500" width="7.500" height="4.500" fill="#222" /></Ext></Extension>
              <Extension><Ext><rect width="16" height="16" fill="#347fe6" /><path d="M0 16V0h10z" fill="#4b95f1" /><path d="M9 3h4v4l-1.300-1.300-6 6L7 13H3V9l1.300 1.300 6-6z" fill="#f1f1f1" /></Ext></Extension>
              <Extension><Ext><circle cx="8" cy="3" r="1.500" fill="#6f6f6f" /><circle cx="8" cy="8" r="1.500" fill="#6f6f6f" /><circle cx="8" cy="13" r="1.500" fill="#6f6f6f" /></Ext></Extension>
            </Extensions>
          </Toolbar>
          <BookmarkBar>
            <Bookmark $ml={0}><FaStar size={16} color="#555" /><Fit w={78}>Bookmarks</Fit></Bookmark>
            <Bookmark $ml={12}><Ext><rect x="1" y="1" width="14" height="14" fill="#3a5795" /><path d="M8.400 15V9.600H6.700V7.500h1.700V6c0-1.900 1-2.700 2.700-2.700h1.500v2h-1c-.9 0-1.100.4-1.100 1.100v1.100h2.100l-.3 2.100h-1.800V15z" fill="#f1f1f4" /></Ext></Bookmark>
            <Bookmark><svg width="16" height="16" viewBox="0 0 16 16"><defs><linearGradient id="ig" x1="0" y1="1" x2="1" y2="0"><stop stopColor="#fbb440" /><stop offset=".5" stopColor="#e0315a" /><stop offset="1" stopColor="#7a3bc4" /></linearGradient></defs><rect width="16" height="16" rx="4" fill="url(#ig)" /><FaInstagram size={12} x="2" y="2" color="#fff" /></svg></Bookmark>
            <Bookmark><Ext><circle cx="8" cy="8" r="8" fill="#2c4258" /><path d="M6.800 3.500h2v2.200h2v1.900h-2v2.600c0 .9.800 1 2 .6v1.700c-2.100.8-4.200.2-4.200-1.900v-3H5.200V6.200q1.500-.6 1.600-2.700z" fill="#fff" /></Ext></Bookmark>
            <Bookmark><FaTwitter size={16} color="#4c9fdb" /></Bookmark>
            <Bookmark><YouTube bg="#cc2127" /></Bookmark>
            <Bookmark><Ext><path d="M0 14c5-1 3-4 7-6l2 2c-3 3-4 5-9 4z" fill="#62bde9" /><path d="M4 2q4 0 4.500 4L14 1l-3.500 6 5 4-5.500-2-3.500 3 1-4-3.500 1 2.500-3z" fill="#f3a619" /></Ext></Bookmark>
            <Bookmark><Ext><path d="M1 7q0-5 6-5h3V0l4 3.500L10 7V5H7Q5 5 4.500 7z" fill="#7f8c8d" /><path d="M15 9q0 5-6 5H6v2l-4-3.500L6 9v2h3q2 0 2.500-2z" fill="#2f9aa8" /></Ext></Bookmark>
            <Bookmark><Ext><path d="M6 5h9.500v10.500H8.500z" fill="#c5c8cd" /><path d="M0 0h8l3.500 12H0z" fill="#4684ea" /><path d="M7 5.500H5M7 5.500a2.400 2.400 0 1 1-.7-1.800" stroke="#fff" fill="none" /><path d="M9.500 8h5M12 7v1q0 3-2.500 5M10.500 9q1 3 3.500 4" stroke="#617d97" fill="none" /></Ext></Bookmark>
            <Bookmark><TinyGlyph $font='700 11px/16px "Liberation Sans", sans-serif' $c="#2020c8">w<TinyGlyph as="i" $font='italic 700 13px/16px "Liberation Serif", serif' $c="#cf7a2c">R</TinyGlyph></TinyGlyph></Bookmark>
            <Bookmark><TinyGlyph $font='700 21px/13px "Liberation Sans", sans-serif' $c="#6ab02f" $bg="#e9ece6" $r={7}>e</TinyGlyph></Bookmark>
            <Bookmark><Ext><rect width="16" height="16" fill="#ececec" /><path d="M8 16V7M2.500 7.500h11" stroke="#222" strokeWidth="1.700" /><path d="M8 7Q4.500 3 6.200 1.300 8-.2 9.800 1.300 11.500 3 8 7z" fill="none" stroke="#222" strokeWidth="1.300" /></Ext></Bookmark>
            <Bookmark $gap={5} $ml={12.5}><FaFolder size={15} color="#757575" /><Fit w={81}>Laboratoria</Fit></Bookmark>
            <Bookmark><Ext><rect width="16" height="16" rx="2" fill="#ececec" /><g strokeWidth="2.200" strokeLinecap="round"><path d="M4.500 2.500l4 11" stroke="#3eb890" /><path d="M9 1.500l3.500 11" stroke="#e9a820" /><path d="M1.500 6.500l11-3.500" stroke="#6ecadc" /><path d="M3 12l11.500-3.500" stroke="#e01765" /></g><path d="M5 10.800l3-1M9.500 4.500l2-.7" stroke="#2c5d49" strokeWidth="2" /></Ext><BookmarkLabel $w={117} $fade><Fit w={118}>chile20171 | Code</Fit></BookmarkLabel></Bookmark>
            <Bookmark><CodeTag /><Fit w={67}>El capitán</Fit></Bookmark>
            <OtherBookmarks><FaFolder size={15} color="#757575" /><Fit w={121}>Other bookmarks</Fit></OtherBookmarks>
          </BookmarkBar>
          <PageArea>
            <Page>
              <SiteNav>
                <BrandLogo />
                <NavLink $ml={546.5}><Fit w={80}>BROWSE SPACES</Fit></NavLink>
                <NavRule />
                <NavLink $ml={40}><Fit w={28.5}>LOGIN</Fit></NavLink>
                <NavLink $ml={49.5}><Fit w={27}>MENU</Fit></NavLink>
                <Burger />
              </SiteNav>
              <ScrollContent>
                <Cards>
                  {cards.map((c) => (
                    <Card key={c.text} $top={c.top}>
                      <CardText>{c.text}</CardText>
                      <LearnMore>LEARN MORE</LearnMore>
                    </Card>
                  ))}
                </Cards>
                <Testimonial>
                  <Quote>
                    <Fit w={610}>“I’m trying to create space where people can feel inspired; the look and design of Breather have helped me do that.</Fit>
                    <Fit w={528}>And without Breather, I’d have a hard time finding space that’s so affordable, spacious and flexible!”</Fit>
                  </Quote>
                  <Person $bold>Bethany Eden</Person>
                  <Person><Fit w={114}>Entrepreneur and Artist</Fit></Person>
                </Testimonial>
                <CityMap>
                  <MapDrawing />
                  <CityGrid>
                    {cities.map(([city, w]) => <div key={city}><Fit w={w}>{`Workshop Space in ${city}`}</Fit></div>)}
                  </CityGrid>
                </CityMap>
                <Footer>
                  <FooterBrand><BrandLogo /></FooterBrand>
                  <FooterHeading $w={235}><Fit w={60.5}>CONTENTS</Fit></FooterHeading>
                  <FooterHeading $w={156}><Fit w={55}>COMPANY</Fit></FooterHeading>
                  <FooterHeading $w={157}><Fit w={46}>PLACES</Fit></FooterHeading>
                  <FooterHeading $w={80}><Fit w={65}>USE CASES</Fit></FooterHeading>
                </Footer>
              </ScrollContent>
            </Page>
            <Scrollbar><ScrollArrow /><Thumb /><ScrollArrow $down /></Scrollbar>
            <HelpButton>
              <HelpIcon width="14" height="14" viewBox="0 0 14 14" fill="none" stroke="#e9f5ee" strokeWidth="1.700"><path d="M2.200 9.800A5.500 5.500 0 1 1 5 12.100L1.200 12.900z" strokeLinejoin="round" /></HelpIcon>
              <Fit w={32}>Ayuda</Fit>
            </HelpButton>
          </PageArea>
        </Browser>
      </DesktopBody>
    </Desktop>
  );
}
